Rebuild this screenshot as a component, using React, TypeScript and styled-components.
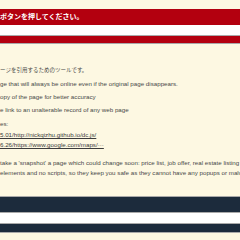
import styled, { createGlobalStyle } from 'styled-components'

const GlobalStyle = createGlobalStyle`
  html, body {
    margin: 0;
    padding: 0;
    background: #fdf8e2;
  }
  body {
    width: 240px;
    height: 240px;
    overflow: hidden;
    font-family: "Liberation Sans", Arial, "Noto Sans CJK JP", sans-serif;
  }
`

const Page = styled.div`
  width: 240px;
  height: 240px;
  overflow: hidden;
  display: flex;
  flex-direction: column;
  background: #fdf8e2;
`

const Header = styled.div`
  padding-top: 9px;
  display: flex;
  flex-direction: column;
`

const Notice = styled.div`
  height: 16px;
  background: #b3000f;
  color: #fff;
  font-weight: bold;
  font-size: 7px;
  line-height: 16px;
  white-space: nowrap;
  font-family: "Liberation Sans", "Noto Sans CJK JP", sans-serif;
`

const Band = styled.div<{ $h: number; $bg: string }>`
  height: ${p => p.$h}px;
  background: ${p => p.$bg};
  border-bottom: 1px solid #a9a9a9;
`

const Content = styled.div`
  flex: 1;
  padding-top: 20px;
  color: #484848;
  font-size: 6.2px;
  white-space: nowrap;
`

const Lead = styled.p`
  margin: 0;
  height: 13px;
  line-height: 13px;
  font-size: 5.5px;
  font-family: "Noto Sans CJK JP", sans-serif;
`

const Feature = styled.p`
  margin: 0;
  height: 13px;
  line-height: 13px;
`

const Examples = styled.div`
  margin-top: 1px;
  line-height: 13px;
`

const ExampleLink = styled.a`
  display: block;
  line-height: 10px;
  color: #3c3c3c;
  text-decoration: underline;
`

const Para = styled.p`
  margin: 8px 0 0;
  line-height: 10px;
`

const Footer = styled.div`
  display: flex;
  flex-direction: column;
  border-top: 1px solid #a9a9a9;
  margin-bottom: 7px;
`

export default function App() {
  return (
    <>
      <GlobalStyle />
      <Page>
        <Header>
          <Notice>ボタンを押してください。</Notice>
          <Band $h={10} $bg="#fff" />
          <Band $h={7} $bg="#b3000f" />
        </Header>
        <Content>
          <Lead>ージを引用するためのツールです。</Lead>
          <Feature>ge that will always be online even if the original page disappears.</Feature>
          <Feature>opy of the page for better accuracy</Feature>
          <Feature>e link to an unalterable record of any web page</Feature>
          <Examples>es:</Examples>
          <ExampleLink>5.01/http://nickqizhu.github.io/dc.js/</ExampleLink>
          <ExampleLink>6.26/https://www.google.com/maps/···</ExampleLink>
          <Para>
            take a 'snapshot' a page which could change soon: price list, job offer, real estate listing
            <br />
            elements and no scripts, so they keep you safe as they cannot have any popups or malware
          </Para>
        </Content>
        <Footer>
          <Band $h={15} $bg="#1c2b3c" />
          <Band $h={10} $bg="#fff" />
          <Band $h={8} $bg="#1c2b3c" />
        </Footer>
      </Page>
    </>
  )
}
